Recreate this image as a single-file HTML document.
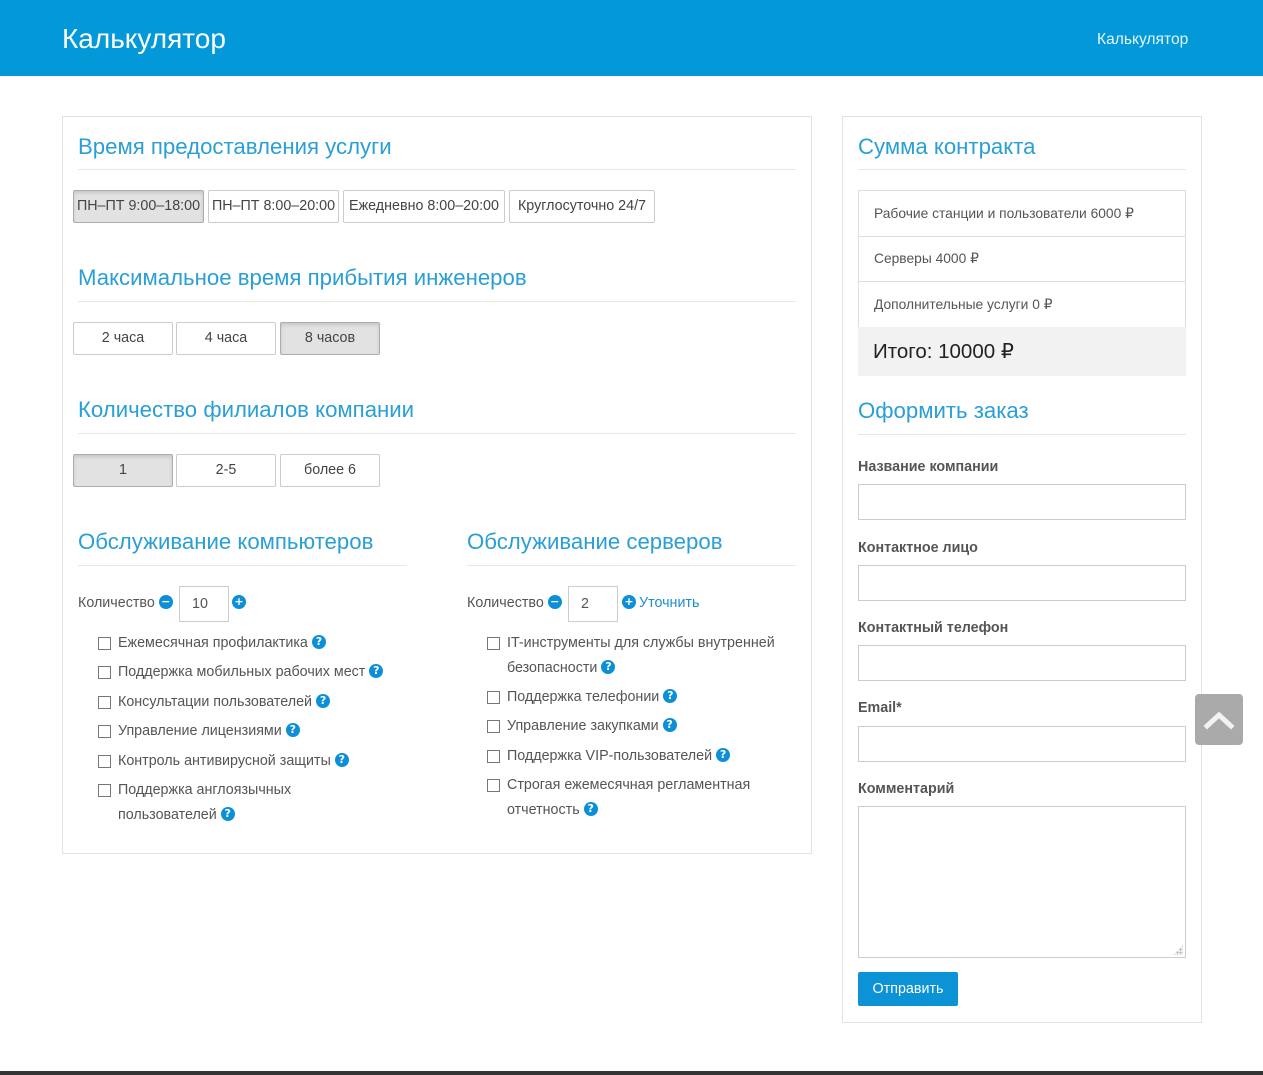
<!DOCTYPE html>
<html><head><meta charset="utf-8"><style>
*{box-sizing:border-box;margin:0;padding:0}
body{width:1263px;height:1075px;position:relative;background:#fff;font-family:"Liberation Sans","DejaVu Sans",sans-serif;color:#555;font-size:14.3px;overflow:hidden}
.a{position:absolute}
.hdr{left:0;top:0;width:1263px;height:76px;background:#0399d9}
.h{position:absolute;color:#2a9fd6;font-size:22.2px;line-height:26px;white-space:nowrap}
.hr{position:absolute;height:1px;background:#e8e8e8}
.panel{position:absolute;border:1px solid #e2e2e2;background:#fff}
.btn{position:absolute;border:1px solid #ccc;border-radius:2px;background:#fff;color:#444;font-size:14.3px;text-align:center;line-height:31px;height:33px;white-space:nowrap}
.btn.on{background:#e2e2e2;border-color:#adadad;box-shadow:inset 0 2px 3px rgba(0,0,0,.12)}
.ic{display:inline-block;width:14px;height:14px;border-radius:50%;background:#0b8fd6;color:#fff;font-size:11px;font-weight:bold;line-height:14px;text-align:center;vertical-align:middle;margin-top:-3px;margin-left:4px;font-family:"DejaVu Sans",sans-serif}
.cb{position:absolute;white-space:nowrap;font-size:14.3px;color:#555;line-height:25px}
.cb i{position:absolute;left:-20px;top:6px;width:13px;height:13px;border:1px solid #777;background:#fff}
.inp{position:absolute;border:1px solid #ccc;background:#fff}
.lbl{position:absolute;font-weight:bold;font-size:14.3px;color:#555}
.row{position:absolute;left:858px;width:328px;border:1px solid #ddd;font-size:13.8px;color:#555;padding-left:15px}
</style></head><body>
<div class="a hdr"></div>
<div class="a" style="left:62px;top:22px;color:#fff;font-size:28px;line-height:34px">Калькулятор</div>
<div class="a" style="left:1097px;top:31px;color:#e6f4fb;font-size:15.6px">Калькулятор</div>

<div class="panel" style="left:62px;top:116px;width:750px;height:738px"></div>
<div class="h" style="left:78px;top:134px">Время предоставления услуги</div>
<div class="hr" style="left:78px;top:169px;width:718px"></div>
<div class="btn on" style="left:73px;top:190px;width:131px">ПН–ПТ 9:00–18:00</div>
<div class="btn" style="left:208px;top:190px;width:131px">ПН–ПТ 8:00–20:00</div>
<div class="btn" style="left:343px;top:190px;width:162px">Ежедневно 8:00–20:00</div>
<div class="btn" style="left:509px;top:190px;width:146px">Круглосуточно 24/7</div>

<div class="h" style="left:78px;top:265px">Максимальное время прибытия инженеров</div>
<div class="hr" style="left:78px;top:301px;width:718px"></div>
<div class="btn" style="left:73px;top:322px;width:100px">2 часа</div>
<div class="btn" style="left:176px;top:322px;width:100px">4 часа</div>
<div class="btn on" style="left:280px;top:322px;width:100px">8 часов</div>

<div class="h" style="left:78px;top:397px">Количество филиалов компании</div>
<div class="hr" style="left:78px;top:433px;width:718px"></div>
<div class="btn on" style="left:73px;top:454px;width:100px">1</div>
<div class="btn" style="left:176px;top:454px;width:100px">2-5</div>
<div class="btn" style="left:280px;top:454px;width:100px">более 6</div>

<div class="h" style="left:78px;top:529px">Обслуживание компьютеров</div>
<div class="hr" style="left:78px;top:565px;width:329px"></div>
<div class="h" style="left:467px;top:529px">Обслуживание серверов</div>
<div class="hr" style="left:467px;top:565px;width:329px"></div>

<div class="a" style="left:78px;top:595px;white-space:nowrap">Количество<span class="ic">−</span></div>
<div class="inp" style="left:179px;top:586px;width:50px;height:36px;padding:9px 12px;color:#555">10</div>
<div class="a" style="left:228px;top:595px"><span class="ic">+</span></div>
<div class="a" style="left:467px;top:595px;white-space:nowrap">Количество<span class="ic">−</span></div>
<div class="inp" style="left:568px;top:586px;width:50px;height:36px;padding:9px 12px;color:#555">2</div>
<div class="a" style="left:618px;top:595px;color:#1a8fd0;white-space:nowrap"><span class="ic" style="margin-right:3px">+</span>Уточнить</div>

<div class="cb" style="left:118px;top:631px"><i></i>Ежемесячная профилактика<span class="ic">?</span></div>
<div class="cb" style="left:118px;top:660px"><i></i>Поддержка мобильных рабочих мест<span class="ic">?</span></div>
<div class="cb" style="left:118px;top:690px"><i></i>Консультации пользователей<span class="ic">?</span></div>
<div class="cb" style="left:118px;top:719px"><i></i>Управление лицензиями<span class="ic">?</span></div>
<div class="cb" style="left:118px;top:749px"><i></i>Контроль антивирусной защиты<span class="ic">?</span></div>
<div class="cb" style="left:118px;top:778px"><i></i>Поддержка англоязычных<br>пользователей<span class="ic">?</span></div>

<div class="cb" style="left:507px;top:631px"><i></i>IT-инструменты для службы внутренней<br>безопасности<span class="ic">?</span></div>
<div class="cb" style="left:507px;top:685px"><i></i>Поддержка телефонии<span class="ic">?</span></div>
<div class="cb" style="left:507px;top:714px"><i></i>Управление закупками<span class="ic">?</span></div>
<div class="cb" style="left:507px;top:744px"><i></i>Поддержка VIP-пользователей<span class="ic">?</span></div>
<div class="cb" style="left:507px;top:773px"><i></i>Строгая ежемесячная регламентная<br>отчетность<span class="ic">?</span></div>

<div class="panel" style="left:842px;top:116px;width:360px;height:907px"></div>
<div class="h" style="left:858px;top:134px">Сумма контракта</div>
<div class="hr" style="left:858px;top:169px;width:328px"></div>
<div class="row" style="top:190px;height:47px;line-height:45px">Рабочие станции и пользователи 6000 ₽</div>
<div class="row" style="top:236px;height:46px;line-height:44px">Серверы 4000 ₽</div>
<div class="row" style="top:281px;height:47px;line-height:45px">Дополнительные услуги 0 ₽</div>
<div class="a" style="left:858px;top:327px;width:328px;height:49px;background:#f2f2f2;color:#222;font-size:20.5px;line-height:50px;padding-left:15px">Итого: 10000 ₽</div>
<div class="h" style="left:858px;top:398px">Оформить заказ</div>
<div class="hr" style="left:858px;top:434px;width:328px"></div>
<div class="lbl" style="left:858px;top:459px">Название компании</div>
<div class="inp" style="left:858px;top:484px;width:328px;height:36px"></div>
<div class="lbl" style="left:858px;top:540px">Контактное лицо</div>
<div class="inp" style="left:858px;top:565px;width:328px;height:36px"></div>
<div class="lbl" style="left:858px;top:620px">Контактный телефон</div>
<div class="inp" style="left:858px;top:645px;width:328px;height:36px"></div>
<div class="lbl" style="left:858px;top:700px">Email*</div>
<div class="inp" style="left:858px;top:726px;width:328px;height:36px"></div>
<div class="lbl" style="left:858px;top:781px">Комментарий</div>
<div class="inp" style="left:858px;top:806px;width:328px;height:152px"></div>
<div class="a" style="left:1173px;top:945px;width:10px;height:10px;background:radial-gradient(circle,#aaa 1px,transparent 1.2px) 0 0/3px 3px;clip-path:polygon(100% 0,100% 100%,0 100%)"></div>
<div class="a" style="left:858px;top:972px;width:100px;height:34px;background:#0b93d5;border-radius:2px;color:#fff;text-align:center;line-height:34px;font-size:14.3px">Отправить</div>

<div class="a" style="left:1195px;top:694px;width:48px;height:51px;background:#aaa;border-radius:4px"></div>
<svg class="a" style="left:1195px;top:694px" width="48" height="51"><path d="M12 32 L24 21 L36 32" stroke="#f2f2f2" stroke-width="5" fill="none" stroke-linecap="square"/></svg>

<div class="a" style="left:0;top:1071px;width:1263px;height:4px;background:#333"></div>
</body></html>
